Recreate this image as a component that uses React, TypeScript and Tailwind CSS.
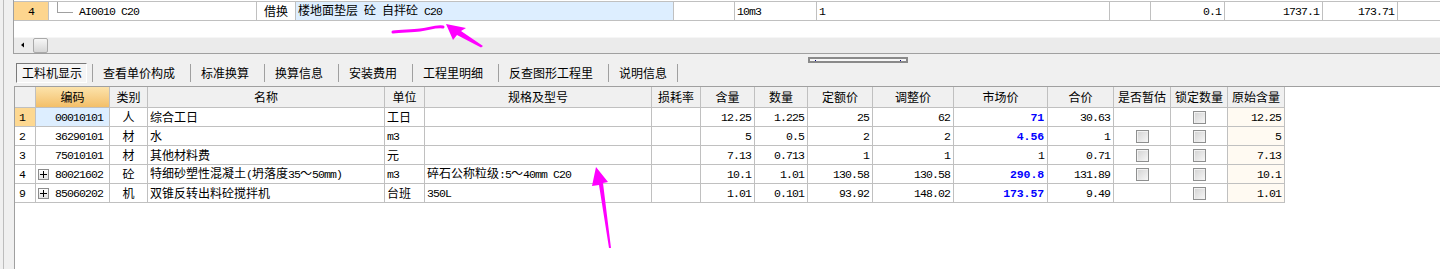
import React from "react";

const CJK = "font-['Noto_Sans_CJK_SC','Noto_Sans_CJK_JP',sans-serif]";
const MONO = "font-['Liberation_Mono','DejaVu_Sans_Mono',monospace] text-[11.5px] tracking-[-0.9px]";
const MONO_BOLD = "font-['Liberation_Mono','DejaVu_Sans_Mono',monospace] text-[11.5px] font-bold tracking-[-0.1px]";

// ascii runs get the half-width mono face, the rest stays CJK
function Txt({ s, mono = MONO }: { s: string; mono?: string }) {
  const parts = s.split(/([\x20-\x7e]+)/).filter(Boolean);
  return (
    <span className="whitespace-pre">
      {parts.map((p, i) =>
        /^[\x20-\x7e]+$/.test(p) ? (
          <span key={i} className={mono}>
            {p}
          </span>
        ) : (
          <span key={i}>{p}</span>
        )
      )}
    </span>
  );
}

function CheckBox() {
  return (
    <div className="w-[13px] h-[13px] border border-[#8e8f8f] bg-linear-to-br from-[#d2d2d2] to-[#f7f7f7] shadow-[inset_1px_1px_0_#f2f2f2]" />
  );
}

function PlusBox() {
  return (
    <div className="ml-[2px] w-[11px] h-[11px] border border-[#8c8c8c] bg-linear-to-b from-white to-[#e2e2e2] flex items-center justify-center">
      <svg width="7" height="7" viewBox="0 0 7 7">
        <path d="M0 3.5H7M3.5 0V7" stroke="#000" strokeWidth="1" />
      </svg>
    </div>
  );
}

function TopRow() {
  const cell = "h-full border-r border-[#c0c0c0] flex items-center shrink-0";
  return (
    <div className="mt-px h-[20px] flex border-y border-[#c0c0c0] bg-white">
      <div className={`${cell} w-[35px] justify-center bg-[#fdd58e]`}>
        <Txt s="4" />
      </div>
      <div className={`${cell} w-[208px] !items-start`}>
        <div className="ml-[8px] w-[16px] h-[11px] border-l border-b border-[#a0a0a0]" />
        <div className="ml-[6px] self-center">
          <Txt s="AI0010 C20" />
        </div>
      </div>
      <div className={`${cell} w-[39px] justify-center`}>借换</div>
      <div className={`${cell} w-[378px] pl-[2px] bg-[#ddeeff]`}>
        <Txt s="楼地面垫层 砼 自拌砼 C20" />
      </div>
      <div className={`${cell} w-[61px]`} />
      <div className={`${cell} w-[82px] pl-[2px]`}>
        <Txt s="10m3" />
      </div>
      <div className={`${cell} w-[293px] pl-[2px]`}>
        <Txt s="1" />
      </div>
      <div className={`${cell} w-[41px]`} />
      <div className={`${cell} w-[74px] justify-end pr-[3px]`}>
        <Txt s="0.1" />
      </div>
      <div className={`${cell} w-[98px] justify-end pr-[3px]`}>
        <Txt s="1737.1" />
      </div>
      <div className={`${cell} w-[75px] justify-end pr-[3px]`}>
        <Txt s="173.71" />
      </div>
      <div className="flex-1" />
    </div>
  );
}

const tabs = ["工料机显示", "查看单价构成", "标准换算", "换算信息", "安装费用", "工程里明细", "反查图形工程里", "说明信息"];

type Col = { t: string; w: string; cls: string; hbg?: string; cbg?: string };

const cols: Col[] = [
  { t: "", w: "w-[21px]", cls: "justify-start pl-[4px]" },
  { t: "编码", w: "w-[74px]", cls: "justify-end pr-[6px]", hbg: "bg-linear-to-b from-[#fce3ab] to-[#f3bf68]" },
  { t: "类别", w: "w-[38px]", cls: "justify-center" },
  { t: "名称", w: "w-[237px]", cls: "justify-start pl-[2px]" },
  { t: "单位", w: "w-[40px]", cls: "justify-start pl-[2px]" },
  { t: "规格及型号", w: "w-[227px]", cls: "justify-start pl-[2px]" },
  { t: "损耗率", w: "w-[49px]", cls: "justify-end pr-[3px]" },
  { t: "含量", w: "w-[54px]", cls: "justify-end pr-[3px]" },
  { t: "数量", w: "w-[53px]", cls: "justify-end pr-[3px]" },
  { t: "定额价", w: "w-[65px]", cls: "justify-end pr-[3px]" },
  { t: "调整价", w: "w-[81px]", cls: "justify-end pr-[3px]" },
  { t: "市场价", w: "w-[94px]", cls: "justify-end pr-[3px]" },
  { t: "合价", w: "w-[66px]", cls: "justify-end pr-[3px]" },
  { t: "是否暂估", w: "w-[57px]", cls: "justify-center" },
  { t: "锁定数量", w: "w-[57px]", cls: "justify-center" },
  { t: "原始含量", w: "w-[57px]", cls: "justify-end pr-[3px]", cbg: "bg-[#fffaf2]" },
];

type Row = {
  n: string;
  code: string;
  plus?: boolean;
  type: string;
  name: string;
  unit: string;
  spec: string;
  qty: string;
  num: string;
  quota: string;
  adj: string;
  market: string;
  blue: boolean;
  total: string;
  est: boolean;
  orig: string;
  sel?: boolean;
};

const rows: Row[] = [
  { n: "1", code: "00010101", type: "人", name: "综合工日", unit: "工日", spec: "", qty: "12.25", num: "1.225", quota: "25", adj: "62", market: "71", blue: true, total: "30.63", est: false, orig: "12.25", sel: true },
  { n: "2", code: "36290101", type: "材", name: "水", unit: "m3", spec: "", qty: "5", num: "0.5", quota: "2", adj: "2", market: "4.56", blue: true, total: "1", est: true, orig: "5" },
  { n: "3", code: "75010101", type: "材", name: "其他材料费", unit: "元", spec: "", qty: "7.13", num: "0.713", quota: "1", adj: "1", market: "1", blue: false, total: "0.71", est: true, orig: "7.13" },
  { n: "4", code: "80021602", plus: true, type: "砼", name: "特细砂塑性混凝土(坍落度35～50mm)", unit: "m3", spec: "碎石公称粒级:5～40mm C20", qty: "10.1", num: "1.01", quota: "130.58", adj: "130.58", market: "290.8", blue: true, total: "131.89", est: true, orig: "10.1" },
  { n: "9", code: "85060202", plus: true, type: "机", name: "双锥反转出料砼搅拌机", unit: "台班", spec: "350L", qty: "1.01", num: "0.101", quota: "93.92", adj: "148.02", market: "173.57", blue: true, total: "9.49", est: false, orig: "1.01" },
];

function rowCells(r: Row): React.ReactNode[] {
  return [
    <Txt s={r.n} />,
    <>
      {r.plus && <PlusBox />}
      <span className={r.plus ? "ml-auto" : ""}>
        <Txt s={r.code} />
      </span>
    </>,
    r.type,
    <Txt s={r.name} />,
    <Txt s={r.unit} />,
    <Txt s={r.spec} />,
    "",
    <Txt s={r.qty} />,
    <Txt s={r.num} />,
    <Txt s={r.quota} />,
    <Txt s={r.adj} />,
    r.blue ? (
      <span className="text-[#0000ff]">
        <Txt s={r.market} mono={MONO_BOLD} />
      </span>
    ) : (
      <Txt s={r.market} />
    ),
    <Txt s={r.total} />,
    r.est ? <CheckBox /> : null,
    <CheckBox />,
    <Txt s={r.orig} />,
  ];
}

export default function App() {
  return (
    <div className={`relative w-[1440px] h-[269px] overflow-hidden bg-[#f0f0f0] flex text-[12px] text-black ${CJK}`}>
      {/* left gutter */}
      <div className="w-[13px] shrink-0 h-full bg-[#f0f0f0]">
        <div className="ml-[3px] w-px h-full bg-[#bdbdbd]" />
      </div>

      <div className="flex-1 flex flex-col min-w-0">
        {/* upper grid */}
        <div className="h-[54px] shrink-0 border-l border-b border-[#a0a0a0] bg-white flex flex-col">
          <TopRow />
          <div className="h-[16px] bg-white" />
          <div className="h-[16px] bg-[#ebebeb] border-t border-[#f6f6f6] flex items-start">
            <svg width="16" height="15" viewBox="0 0 16 15">
              <polygon points="7,7 10,4.5 10,9.5" fill="#000" />
            </svg>
            <div className="ml-[3px] w-[15px] h-[15px] rounded-[2px] border border-[#a9a9a9] bg-linear-to-b from-[#f6f6f6] to-[#d6d6d6]" />
          </div>
        </div>

        {/* splitter */}
        <div className="h-[9px] shrink-0 flex items-start">
          <div className="ml-[795px] mt-[3px] w-[100px] h-[6px] border-2 border-[#8a8a8a] bg-[#f7f7f7] flex items-center justify-between px-[5px]">
            <div className="w-px h-px bg-[#000080]" />
            <div className="w-px h-px bg-[#000080]" />
          </div>
        </div>

        {/* tabs */}
        <div className="h-[23px] shrink-0 flex items-start">
          {tabs.map((t, i) =>
            i === 0 ? (
              <div
                key={t}
                className="ml-[3px] h-[20px] pl-[5px] pr-[4px] flex items-center border border-t-[#7a7a7a] border-l-[#7a7a7a] border-b-white border-r-white bg-[#f5f5f5]"
              >
                {t}
              </div>
            ) : (
              <div key={t} className="flex items-start">
                <div className="mt-[1px] ml-[5px] w-px h-[18px] bg-[#a0a0a0]" />
                <div className="h-[20px] px-[10px] flex items-center">{t}</div>
              </div>
            )
          )}
          <div className="mt-[1px] ml-0 w-px h-[18px] bg-[#a0a0a0]" />
        </div>

        {/* lower grid */}
        <div className="flex-1 ml-px border-l border-t border-[#a0a0a0] bg-white">
          <div className="flex h-[21px] border-b border-[#c0c0c0] w-fit">
            {cols.map((c, i) => (
              <div
                key={i}
                className={`${c.w} shrink-0 h-full border-r border-[#c0c0c0] flex items-center justify-center ${c.hbg ?? "bg-[#f0f0f0]"}`}
              >
                {c.t}
              </div>
            ))}
          </div>
          {rows.map((r) => (
            <div key={r.n} className="flex h-[19px] border-b border-[#c0c0c0] w-fit">
              {rowCells(r).map((v, i) => {
                const c = cols[i];
                let bg = c.cbg ?? "bg-white";
                if (r.sel && i === 0) bg = "bg-[#fdd891]";
                if (r.sel && i === 1) bg = "bg-[#ddeeff]";
                return (
                  <div key={i} className={`${c.w} shrink-0 h-full border-r border-[#c0c0c0] flex items-center ${c.cls} ${bg}`}>
                    {v}
                  </div>
                );
              })}
            </div>
          ))}
        </div>
      </div>

      {/* pen annotations */}
      <svg className="absolute left-0 top-0 pointer-events-none" width="1440" height="269" viewBox="0 0 1440 269">
        <path d="M393 32 C 402 31, 411 31, 420 30 S 435 26, 443 27" stroke="#ff00ff" strokeWidth="3" fill="none" strokeLinecap="round" />
        <polygon points="446,24 466,28 461,31 483,46 481,47.5 457,35 453,40" fill="#ff00ff" />
        <polygon points="596,167 608,182 603,183 611,248 609,248 599,185 592,186" fill="#ff00ff" />
      </svg>
    </div>
  );
}
